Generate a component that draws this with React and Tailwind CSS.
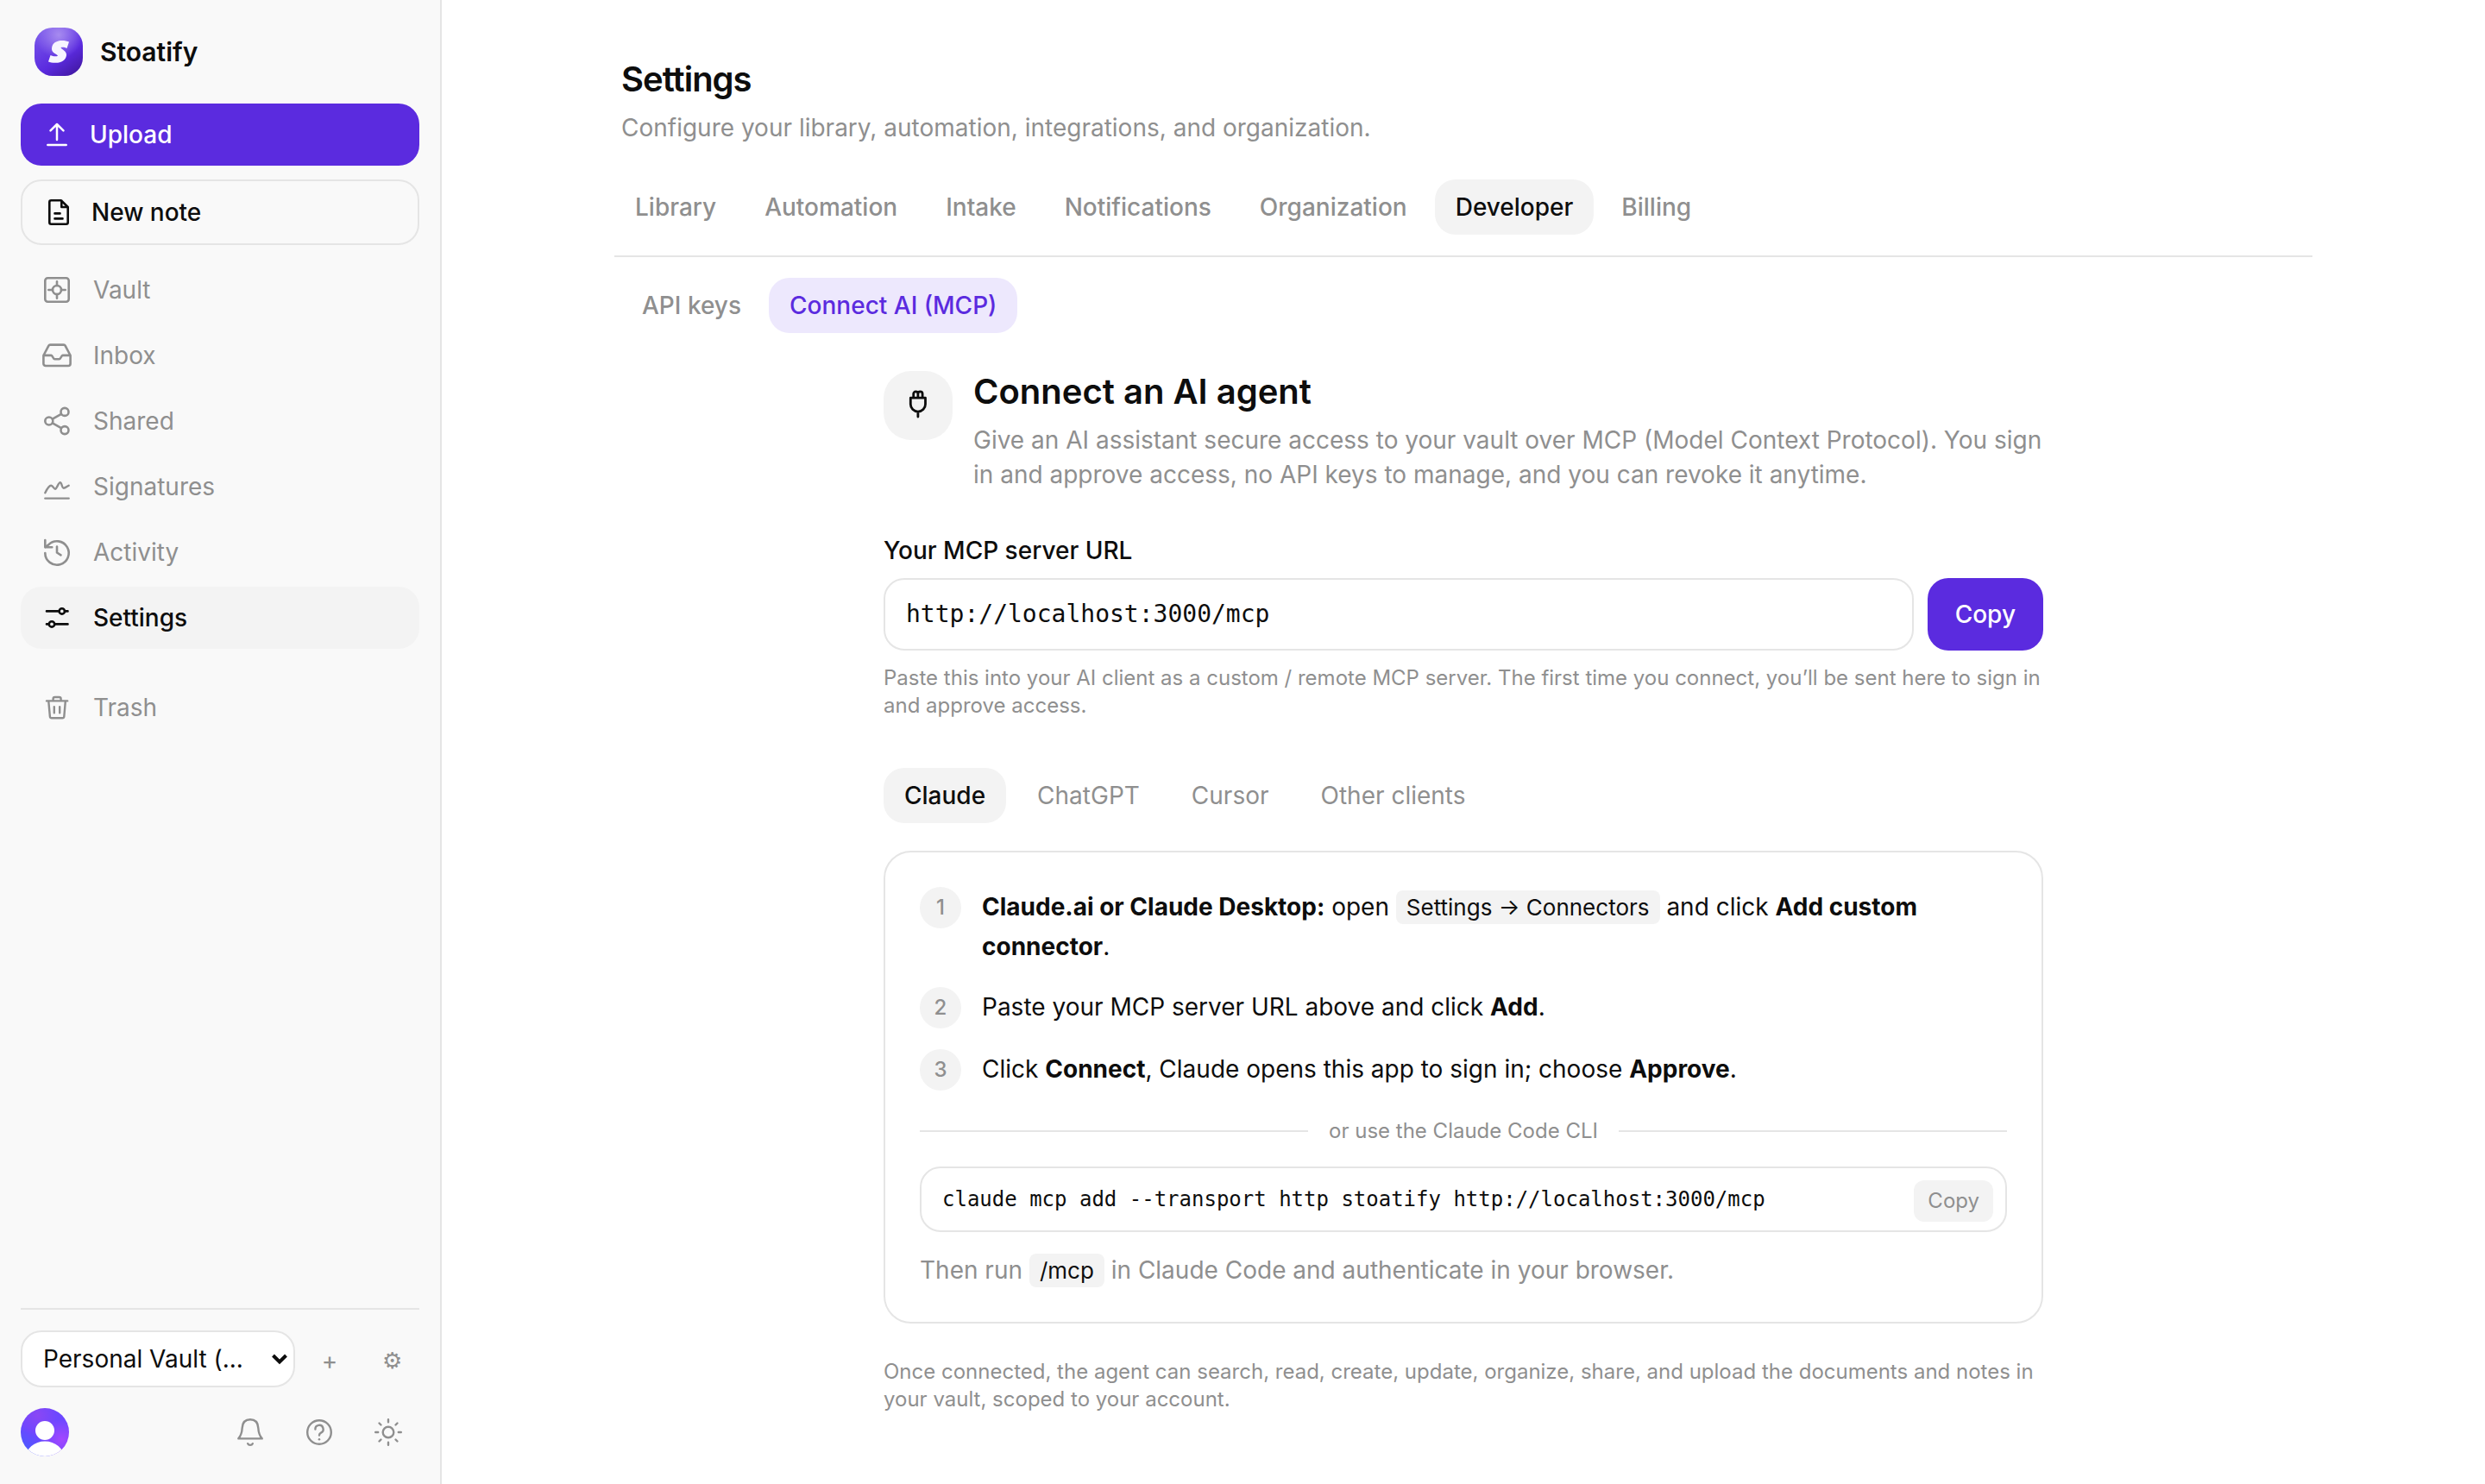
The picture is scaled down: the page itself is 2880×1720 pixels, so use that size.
const navItems = [
  { label: "Vault", icon: VaultIcon },
  { label: "Inbox", icon: InboxIcon },
  { label: "Shared", icon: ShareIcon },
  { label: "Signatures", icon: SignatureIcon },
  { label: "Activity", icon: HistoryIcon },
  { label: "Settings", icon: SlidersIcon, active: true },
];

const settingsTabs = ["Library", "Automation", "Intake", "Notifications", "Organization", "Developer", "Billing"];
const clientTabs = ["Claude", "ChatGPT", "Cursor", "Other clients"];

const serverUrl = "http://localhost:3000/mcp";

function Icon({ children, width = 2.6 }) {
  return (
    <svg
      viewBox="0 0 36 36"
      className="size-9 shrink-0 overflow-visible"
      fill="none"
      stroke="currentColor"
      strokeWidth={width}
      strokeLinecap="round"
      strokeLinejoin="round"
    >
      {children}
    </svg>
  );
}

function UploadIcon() {
  return (
    <Icon width={2.5}>
      <path d="M18 24V6M10.500 13.300L18 6l7.500 7.300M7.300 30h21.400" />
    </Icon>
  );
}

function NoteIcon() {
  return (
    <Icon>
      <path d="M21 4.300H9.300a2 2 0 0 0-2 2v23.400a2 2 0 0 0 2 2h17.400a2 2 0 0 0 2-2V12zM21.300 4.500V12h7M13.500 19.400h6M13.500 25.400h9" />
    </Icon>
  );
}

function VaultIcon() {
  return (
    <Icon>
      <rect x="4.300" y="4.300" width="27.400" height="27.400" rx="3" />
      <circle cx="18" cy="18" r="5" />
      <path d="M18 8.300V13M18 23v4.700M8.300 18H13M23 18h4.700" />
    </Icon>
  );
}

function InboxIcon() {
  return (
    <Icon>
      <path d="M2.400 18l6-11.300a2 2 0 0 1 1.800-1.100h15.600a2 2 0 0 1 1.800 1.100l6 11.300v9.500a2.500 2.500 0 0 1-2.500 2.500H4.900a2.500 2.500 0 0 1-2.500-2.500zM2.400 17.900h9.100c1.500 0 1.800 4.400 4 4.400h5c2.200 0 2.500-4.400 4-4.400h9.100" />
    </Icon>
  );
}

function ShareIcon() {
  return (
    <Icon>
      <circle cx="27" cy="7.400" r="4.500" />
      <circle cx="8.800" cy="18" r="4.500" />
      <circle cx="27" cy="28.600" r="4.500" />
      <path d="M12.800 15.700l10.200-5.900M12.800 20.300L23 26.200" />
    </Icon>
  );
}

function SignatureIcon() {
  return (
    <Icon width={2.4}>
      <path d="M4.300 25.200c2-4 4.500-8.400 6.900-8.400 2.300 0 3 3.900 4.800 3.900s3.700-7.400 5.700-7.400 2 6.400 4 6.400 3.800-1.900 6-3M4.300 31.600h27.400" />
    </Icon>
  );
}

function HistoryIcon() {
  return (
    <Icon>
      <path d="M4.300 19A13.700 13.700 0 1 0 8.300 9.300l-3.500 3M4.300 4v8.200h8M18 11.500v7l4.500 2.800" />
    </Icon>
  );
}

function SlidersIcon() {
  return (
    <Icon>
      <path d="M6 10.400h14.500M27 10.400h3.500M6 25.400h2.600M15.400 25.400h15.100" />
      <circle cx="23.800" cy="10.400" r="3.200" />
      <circle cx="12" cy="25.400" r="3.200" />
    </Icon>
  );
}

function TrashIcon() {
  return (
    <Icon width={2.4}>
      <path d="M6 10.400h24.200M13.600 10V8a2 2 0 0 1 2-2h5a2 2 0 0 1 2 2v2M8.300 10.800l1.600 17.800a2 2 0 0 0 2 1.700h12.400a2 2 0 0 0 2-1.700l1.500-17.800M14.800 17.200v7M21.200 17.200v7" />
    </Icon>
  );
}

function PlugIcon() {
  return (
    <Icon width={2.8}>
      <path d="M9.300 9.200h17.200v7.300a8.600 8.600 0 0 1-17.200 0zM12.700 9V4.500a2.600 2.600 0 0 1 5.200 0V9M17.900 9V4.500a2.600 2.600 0 0 1 5.200 0V9M17.900 25.200V31" />
    </Icon>
  );
}

function BellIcon() {
  return (
    <Icon width={2.4}>
      <path d="M4.300 25.400h27.400c-3-3.400-4.100-7-4.400-12.400C27 7 24.500 3.200 18 3.200S9 7 8.700 13c-.3 5.400-1.400 9-4.400 12.400zM15.200 31.200c1 2.200 4.600 2.200 5.600 0" />
    </Icon>
  );
}

function HelpIcon() {
  return (
    <Icon width={2.4}>
      <circle cx="18" cy="18" r="13.800" />
      <path d="M13.400 14.500a4.600 4.600 0 1 1 6.600 4.100c-1.300.7-2 1.500-2 3" />
      <circle cx="18" cy="26.300" r="1.300" fill="currentColor" stroke="none" />
    </Icon>
  );
}

function SunIcon() {
  return (
    <Icon width={2.4}>
      <circle cx="18" cy="18" r="6.300" />
      <path d="M18 3.200v3M18 29.800v3M3.200 18h3M29.800 18h3M7.500 7.500l2 2M26.500 26.500l2 2M7.500 28.500l2-2M26.500 9.500l2-2" />
    </Icon>
  );
}

function Logo() {
  return (
    <div className="flex size-14 items-center justify-center rounded-[21px] bg-[radial-gradient(circle_at_50%_15%,#a78bf0_0%,transparent_50%),linear-gradient(145deg,#7c5cec_0%,#5b2bdf_60%,#3c1496_100%)]">
      <svg viewBox="0 0 24 26" className="h-[26px] w-6">
        <path
          d="M24 1.500L21.500 9c-2.500-1.500-5-1.500-7-1 .5 2.500 7 3.500 6.500 9-.6 6-6 9-13 8.800-3.500 0-6-.5-8-1.300L2.500 17c3 1.500 6.500 1.700 8.500.8-.5-2.500-7.500-3-7-8.800C4.500 2.500 10 0 16 0c3 0 6 .6 8 1.500z"
          fill="#f7f4ff"
        />
      </svg>
    </div>
  );
}

function Avatar() {
  return (
    <div className="size-14 overflow-hidden rounded-full bg-[radial-gradient(circle_at_85%_65%,#a347ff_0%,transparent_40%),radial-gradient(circle_at_35%_15%,#8a47f5_0%,transparent_40%),linear-gradient(35deg,#3f62ff_0%,#6c47ff_40%)]">
      <svg viewBox="0 0 56 56" className="size-14" fill="#fff">
        <circle cx="28" cy="26" r="11" />
        <ellipse cx="28" cy="57" rx="22" ry="18.500" />
      </svg>
    </div>
  );
}

function Sidebar() {
  return (
    <aside className="flex w-[512px] shrink-0 flex-col border-r-2 border-[#e5e5e5] bg-[#f9f9f9] px-6 py-8 text-[28px] leading-10">
      <div className="flex items-center gap-5 px-4">
        <Logo />
        <span className="text-[30px] font-semibold">Stoatify</span>
      </div>

      <button className="mt-8 flex h-[72px] items-center gap-5 rounded-3xl bg-[#5b2bdf] px-6 font-medium text-white">
        <UploadIcon />
        Upload
      </button>
      <button className="mt-4 flex h-[76px] items-center gap-5 rounded-3xl border-2 border-[#e5e5e5] px-6 font-medium">
        <NoteIcon />
        New note
      </button>

      <nav className="mt-4 flex flex-col gap-1 text-[#8f8f8f]">
        {navItems.map(({ label, icon: NavIcon, active }) => (
          <a
            key={label}
            className={
              active
                ? "flex h-[72px] items-center gap-6 rounded-3xl bg-[#f3f3f3] px-6 font-medium text-[#0d0d0d]"
                : "flex h-[72px] items-center gap-6 rounded-3xl px-6"
            }
          >
            <NavIcon />
            {label}
          </a>
        ))}
        <a className="mt-7 flex h-[72px] items-center gap-6 px-6">
          <TrashIcon />
          Trash
        </a>
      </nav>

      {/* Vault switcher and account */}
      <div className="mt-auto border-t-2 border-[#e5e5e5] pt-6">
        <div className="flex items-center gap-2">
          <div className="flex h-[66px] w-[318px] shrink-0 items-center justify-between rounded-3xl border-2 border-[#e5e5e5] bg-white pr-[7px] pl-6">
            <span>Personal Vault (...</span>
            <svg viewBox="0 0 18 13" className="h-[13px] w-[18px]" fill="none" stroke="currentColor" strokeWidth="4">
              <path d="M1.500 2L9 9.500 16.500 2" />
            </svg>
          </div>
          <span className="w-16 pt-1 text-center text-[28px] text-[#8f8f8f]">+</span>
          <span className="w-16 pt-1 text-center text-[26px] text-[#8f8f8f]">⚙</span>
        </div>
        <div className="mt-6 flex items-center">
          <Avatar />
          <div className="ml-auto flex gap-11 pr-[18px] text-[#8f8f8f]">
            <BellIcon />
            <HelpIcon />
            <SunIcon />
          </div>
        </div>
      </div>
    </aside>
  );
}

function Code({ children }) {
  return (
    <code className="rounded-lg bg-[#f3f3f3] px-3 py-1 font-['Inter',sans-serif] text-[26px] leading-none text-[#0d0d0d]">
      {children}
    </code>
  );
}

function Step({ number, children }) {
  return (
    <li className="flex gap-6">
      <span className="flex size-12 shrink-0 items-center justify-center rounded-full bg-[#f3f3f3] text-2xl font-medium text-[#8f8f8f]">
        {number}
      </span>
      <span className="leading-[46px]">{children}</span>
    </li>
  );
}

function ClaudeCard() {
  return (
    <section className="mt-8 h-[548px] rounded-[32px] border-2 border-[#e5e5e5] p-10">
      <ol className="flex flex-col gap-6">
        <Step number={1}>
          <b>Claude.ai or Claude Desktop:</b> open <Code>Settings → Connectors</Code> and click <b>Add custom connector</b>.
        </Step>
        <Step number={2}>
          Paste your MCP server URL above and click <b>Add</b>.
        </Step>
        <Step number={3}>
          Click <b>Connect</b>, Claude opens this app to sign in; choose <b>Approve</b>.
        </Step>
      </ol>

      <div className="mt-[31px] flex items-center gap-6 text-2xl leading-8 text-[#8f8f8f]">
        <span className="h-0.5 flex-1 bg-[#e5e5e5]" />
        or use the Claude Code CLI
        <span className="h-0.5 flex-1 bg-[#e5e5e5]" />
      </div>

      <div className="mt-[25px] flex h-[76px] items-center justify-between rounded-3xl border-2 border-[#e5e5e5] pr-3.5 pl-6">
        <code className="font-['DejaVu_Sans_Mono',monospace] text-2xl">claude mcp add --transport http stoatify {serverUrl}</code>
        <button className="mt-1 h-12 rounded-xl bg-[#f3f3f3] px-4 text-2xl text-[#8f8f8f]">Copy</button>
      </div>
      <p className="mt-6 leading-10 text-[#8f8f8f]">
        Then run <Code>/mcp</Code> in Claude Code and authenticate in your browser.
      </p>
    </section>
  );
}

export default function App() {
  return (
    <div className="flex h-[1720px] w-[2880px] overflow-hidden bg-white font-['Inter',sans-serif] text-[28px] text-[#0d0d0d]">
      <Sidebar />

      <main className="flex-1 px-[200px] pt-16">
        <header className="px-2">
          <h1 className="text-[40px] leading-[56px] font-semibold tracking-tight">Settings</h1>
          <p className="mt-2 leading-10 text-[#8f8f8f]">Configure your library, automation, integrations, and organization.</p>
        </header>

        <div className="mt-10 flex gap-2 border-b-2 border-[#e5e5e5] pb-6 font-medium">
          {settingsTabs.map((tab) => (
            <button
              key={tab}
              className={
                tab === "Developer"
                  ? "h-16 rounded-3xl bg-[#f3f3f3] px-6"
                  : "h-16 rounded-3xl px-6 text-[#8f8f8f]"
              }
            >
              {tab}
            </button>
          ))}
        </div>
        <div className="mt-6 flex gap-2 px-2 font-medium">
          <button className="h-16 rounded-3xl px-6 text-[#8f8f8f]">API keys</button>
          <button className="h-16 rounded-3xl bg-[#ede8fd] px-6 text-[#5b2bdf]">Connect AI (MCP)</button>
        </div>

        <div className="mx-auto mt-11 w-[1344px]">
          <div className="flex gap-6">
            <div className="flex size-20 shrink-0 items-center justify-center rounded-[32px] bg-[#f3f3f3]">
              <PlugIcon />
            </div>
            <div>
              <h2 className="text-[40px] leading-[48px] font-semibold">Connect an AI agent</h2>
              <p className="mt-3 leading-10 text-[#8f8f8f]">
                Give an AI assistant secure access to your vault over MCP (Model Context Protocol). You sign in and approve
                access, no API keys to manage, and you can revoke it anytime.
              </p>
            </div>
          </div>

          <label className="mt-12 block leading-10 font-medium">Your MCP server URL</label>
          <div className="mt-3 flex h-[84px] gap-4">
            <div className="flex flex-1 items-center rounded-3xl border-2 border-[#e5e5e5] px-6 font-['DejaVu_Sans_Mono',monospace]">
              {serverUrl}
            </div>
            <button className="rounded-3xl bg-[#5b2bdf] px-8 font-medium text-white">Copy</button>
          </div>
          <p className="mt-4 text-2xl leading-8 text-[#8f8f8f]">
            Paste this into your AI client as a custom / remote MCP server. The first time you connect, you’ll be sent here to
            sign in and approve access.
          </p>

          <div className="mt-14 flex gap-3">
            {clientTabs.map((tab) => (
              <button
                key={tab}
                className={
                  tab === "Claude" ? "h-16 rounded-3xl bg-[#f3f3f3] px-6 font-medium" : "h-16 rounded-3xl px-6 text-[#8f8f8f]"
                }
              >
                {tab}
              </button>
            ))}
          </div>

          <ClaudeCard />

          <p className="mt-10 text-2xl leading-8 text-[#8f8f8f]">
            Once connected, the agent can search, read, create, update, organize, share, and upload the documents and notes in
            your vault, scoped to your account.
          </p>
        </div>
      </main>
    </div>
  );
}
